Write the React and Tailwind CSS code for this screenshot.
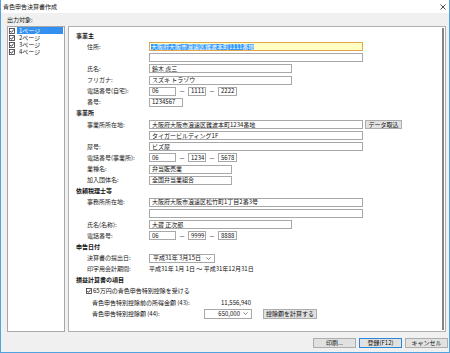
import React from 'react';

function Check({ checked = true }) {
  return (
    <svg width="6" height="6" viewBox="0 0 6 6" className="shrink-0">
      <rect x="0.5" y="0.5" width="5" height="5" fill="#fff" stroke="#333" strokeWidth="0.8" />
      {checked && <path d="M1.3 3 L2.5 4.3 L4.8 1.5" fill="none" stroke="#222" strokeWidth="0.9" />}
    </svg>
  );
}

function Field({ className = '', children }) {
  return (
    <div className={`h-[9px] border border-[#a8a8a8] bg-white px-[2px] flex items-center text-[6px] leading-none text-[#111] overflow-hidden whitespace-nowrap shrink-0 ${className}`}>
      {children}
    </div>
  );
}

function Chevron() {
  return (
    <svg width="5" height="3" viewBox="0 0 5 3" className="shrink-0">
      <path d="M0.5 0.5 L2.5 2.4 L4.5 0.5" fill="none" stroke="#444" strokeWidth="0.7" />
    </svg>
  );
}

function Btn({ className = '', children }) {
  return (
    <div className={`h-[9px] border border-[#adadad] bg-[#e1e1e1] flex items-center justify-center text-[6px] leading-none text-[#111] whitespace-nowrap shrink-0 ${className}`}>
      {children}
    </div>
  );
}

function Heading({ children }) {
  return <div className="h-[11.125px] flex items-center text-[6px] leading-none font-bold text-[#111]">{children}</div>;
}

function Row({ label, children }) {
  return (
    <div className="h-[11.125px] flex items-center">
      <div className="w-[62px] ml-[11px] shrink-0 text-[6px] leading-none text-[#222] whitespace-nowrap">{label}</div>
      {children}
    </div>
  );
}

function Phone({ a, b, c }) {
  return (
    <div className="flex items-center">
      <Field className="w-[27px]">{a}</Field>
      <span className="w-[12px] text-center text-[6px] leading-none">－</span>
      <Field className="w-[18px]">{b}</Field>
      <span className="w-[12px] text-center text-[6px] leading-none">－</span>
      <Field className="w-[19px]">{c}</Field>
    </div>
  );
}

const pages = ['1ページ', '2ページ', '3ページ', '4ページ'];

export default function App() {
  return (
    <div className="w-[450px] h-[353px] flex flex-col bg-[#f0f0f0] border-x border-b border-[#4ea3e0] font-['Noto_Sans_CJK_JP','Noto_Sans',sans-serif] text-[#111] overflow-hidden">
      {/* title bar */}
      <div className="h-[13px] bg-white flex items-center justify-between pl-[2px] pr-[3px] shrink-0">
        <span className="text-[6px] leading-none">青色申告決算書作成</span>
        <svg width="6" height="6" viewBox="0 0 6 6">
          <path d="M0.5 0.5 L5.5 5.5 M5.5 0.5 L0.5 5.5" stroke="#222" strokeWidth="0.8" />
        </svg>
      </div>

      <div className="h-[13px] flex items-center pl-[6px] text-[6px] leading-none shrink-0">出力対象:</div>

      <div className="flex h-[306px] shrink-0">
        {/* page list */}
        <div className="ml-[6px] w-[58px] border border-[#a8a8a8] bg-white flex flex-col">
          {pages.map((p, i) => (
            <div key={p} className="h-[7px] flex items-center">
              <div className="w-[8px] flex justify-center"><Check /></div>
              <div className={`ml-[1px] mr-[1px] flex-1 h-full flex items-center px-[2px] text-[6px] leading-none ${i === 0 ? 'bg-[#3390f0] text-white' : ''}`}>{p}</div>
            </div>
          ))}
        </div>

        {/* main form */}
        <div className="ml-[3px] w-[378px] border border-[#b0b0b0] bg-white flex">
          <div className="flex-1 pl-[7px] pt-[3px] flex flex-col">
            <Heading>事業主</Heading>
            <Row label="住所:">
              <Field className="w-[214px] !bg-[#ffffc4] !border-[#e0a84a] !px-[1px]">
                <span className="bg-[#3399ff] text-white">大阪府大阪市浪速区難波本町1111番地</span>
              </Field>
            </Row>
            <Row label=""><Field className="w-[214px]" /></Row>
            <Row label="氏名:"><Field className="w-[143px]">鈴木 虎三</Field></Row>
            <Row label="フリガナ:"><Field className="w-[143px]">スズキ トラゾウ</Field></Row>
            <Row label="電話番号(自宅):"><Phone a="06" b="1111" c="2222" /></Row>
            <Row label="番号:"><Field className="w-[34px]">1234567</Field></Row>

            <Heading>事業所</Heading>
            <Row label="事業所所在地:">
              <Field className="w-[214px]">大阪府大阪市浪速区難波本町1234番地</Field>
              <Btn className="ml-[2px] w-[37px]">データ取込</Btn>
            </Row>
            <Row label=""><Field className="w-[214px]">タイガービルディング1F</Field></Row>
            <Row label="屋号:"><Field className="w-[214px]">ビズ屋</Field></Row>
            <Row label="電話番号(事業所):"><Phone a="06" b="1234" c="5678" /></Row>
            <Row label="業種名:"><Field className="w-[83px]">弁当販売業</Field></Row>
            <Row label="加入団体名:"><Field className="w-[83px]">全国弁当業組合</Field></Row>

            <Heading>依頼税理士等</Heading>
            <Row label="事務所所在地:"><Field className="w-[214px]">大阪府大阪市浪速区松竹町1丁目2番3号</Field></Row>
            <Row label=""><Field className="w-[214px]" /></Row>
            <Row label="氏名(名称):"><Field className="w-[143px]">大蔵 正次郎</Field></Row>
            <Row label="電話番号:"><Phone a="06" b="9999" c="8888" /></Row>

            <Heading>申告日付</Heading>
            <Row label="決算書の提出日:">
              <Field className="w-[66px] justify-between !px-[3px]">
                <span>平成31年 3月15日</span>
                <Chevron />
              </Field>
            </Row>
            <Row label="印字用会計期間:">
              <span className="text-[6px] leading-none whitespace-nowrap">平成31年 1月 1日 ～ 平成31年12月31日</span>
            </Row>

            <Heading>損益計算書の項目</Heading>
            <div className="h-[11.125px] flex items-center ml-[10px] gap-[1px]">
              <Check />
              <span className="text-[6px] leading-none whitespace-nowrap">65万円の青色申告特別控除を受ける</span>
            </div>
            <div className="h-[11.125px] flex items-center ml-[16px]">
              <div className="w-[159px] flex justify-between text-[6px] leading-none whitespace-nowrap">
                <span>青色申告特別控除前の所得金額 (43):</span>
                <span>11,556,940</span>
              </div>
            </div>
            <div className="h-[11.125px] flex items-center ml-[16px]">
              <div className="w-[112px] text-[6px] leading-none whitespace-nowrap">青色申告特別控除額 (44):</div>
              <Field className="w-[48px] h-[10px] justify-end gap-[3px] !px-[3px]">
                <span>650,000</span>
                <Chevron />
              </Field>
              <Btn className="ml-[11px] w-[54px] h-[10px]">控除額を計算する</Btn>
            </div>
          </div>
          <div className="w-[3px] flex py-[1px]">
            <div className="w-[2px] bg-[#858585]" />
          </div>
        </div>
      </div>

      {/* bottom buttons */}
      <div className="mt-[6px] flex justify-end gap-[3px] pr-[1px]">
        <Btn className="w-[43px] h-[10px]">印刷...</Btn>
        <Btn className="w-[43px] h-[10px] !border-[#2a86d8]">登録(F12)</Btn>
        <Btn className="w-[43px] h-[10px]">キャンセル</Btn>
      </div>
    </div>
  );
}
